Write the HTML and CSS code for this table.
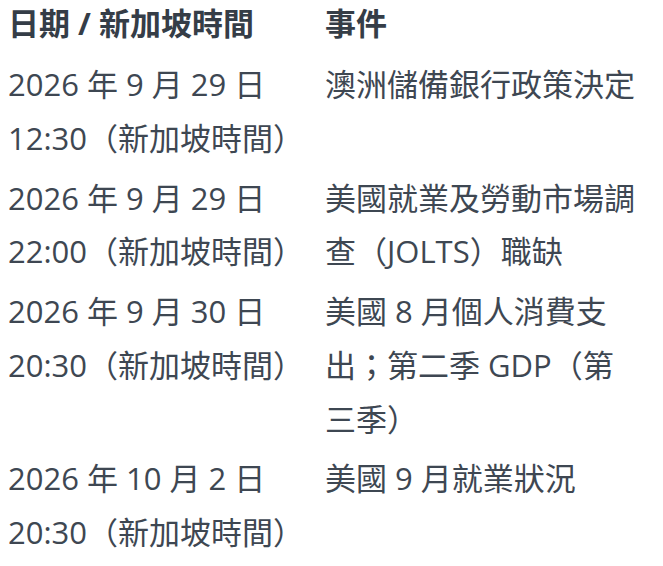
FILE: index.html
```html
<!DOCTYPE html>
<html lang="zh-Hant">
<head>
<meta charset="utf-8">
<link rel="stylesheet" href="styles.css">
</head>
<body>
<div class="schedule">
  <div class="row head">
    <div class="cell">日期 / 新加坡時間</div>
    <div class="cell">事件</div>
  </div>
  <div class="row">
    <div class="cell">2026 年 9 月 29 日<br>12:30（新加坡時間）</div>
    <div class="cell">澳洲儲備銀行政策決定</div>
  </div>
  <div class="row">
    <div class="cell">2026 年 9 月 29 日<br>22:00（新加坡時間）</div>
    <div class="cell">美國就業及勞動市場調查（JOLTS）職缺</div>
  </div>
  <div class="row">
    <div class="cell">2026 年 9 月 30 日<br>20:30（新加坡時間）</div>
    <div class="cell">美國 8 月個人消費支出；第二季 GDP（第三季）</div>
  </div>
  <div class="row">
    <div class="cell">2026 年 10 月 2 日<br>20:30（新加坡時間）</div>
    <div class="cell">美國 9 月就業狀況</div>
  </div>
</div>
</body>
</html>
```

FILE: styles.css
```css
html, body {
  margin: 0;
  padding: 0;
  background: #ffffff;
}

.schedule {
  font-family: "Open Sans", "Noto Sans CJK TC", sans-serif;
  font-size: 31px;
  color: #3e4752;
  padding-left: 8px;
  width: 628px;
}

.row {
  display: grid;
  grid-template-columns: 317px 311px;
  padding: 3px 0;
  line-height: 53.75px;
}

.row.head {
  font-weight: 700;
  color: #353d47;
  line-height: 47px;
  padding: 0 0 8px;
}

.cell {
  word-break: normal;
}
```
